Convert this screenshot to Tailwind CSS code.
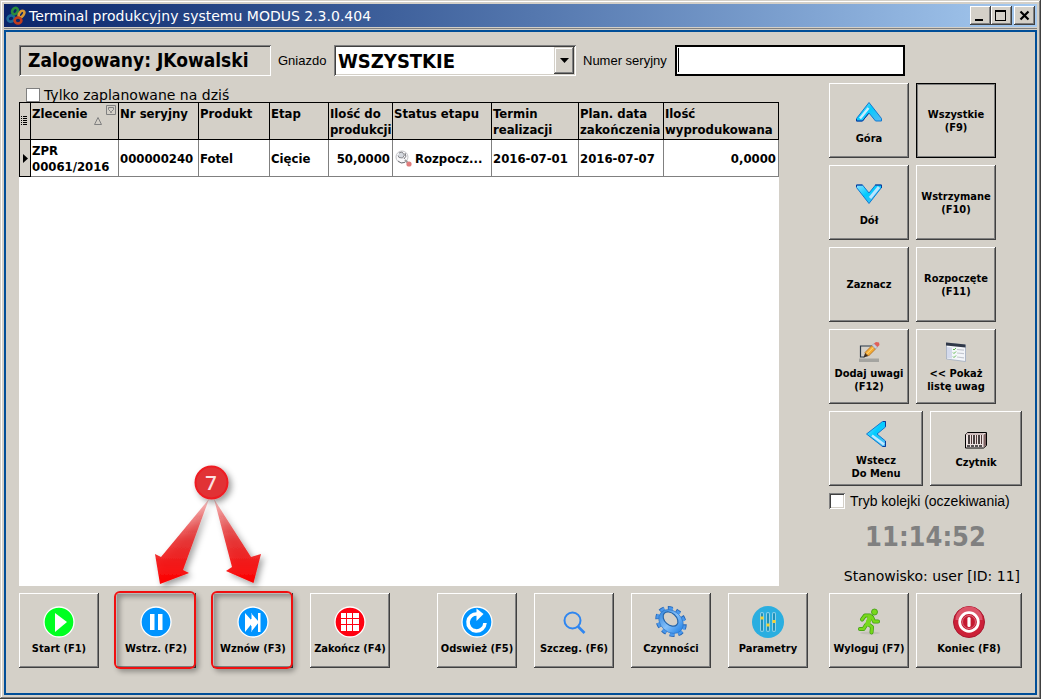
<!DOCTYPE html>
<html lang="pl">
<head>
    <meta charset="UTF-8">
    <meta name="viewport" content="width=device-width, initial-scale=1.0">
    <title>Terminal produkcyjny systemu MODUS 2.3.0.404</title>
    <script src="https://cdn.jsdelivr.net/npm/@tailwindcss/browser@4"></script>
</head>
<body class="bg-[#d4d0c8] text-black font-['DejaVu_Sans_Condensed','DejaVu_Sans',sans-serif]">
    <!-- window frame -->
    <div class="min-h-screen flex flex-col p-1 shadow-[inset_-1px_-1px_0_#404040,inset_1px_1px_0_#d4d0c8,inset_-2px_-2px_0_#808080,inset_2px_2px_0_#fff]">
        <header class="h-[23px] flex items-center pl-[2px] pr-[2px] bg-linear-to-r from-[#0a246a] to-[#a6caf0]">
            <svg class="w-5 h-5" viewBox="0 0 20 20" fill="none" stroke-width="2.600">
                <ellipse cx="5" cy="12.500" rx="3.400" ry="3" stroke="#1c6a98" transform="rotate(-25 5 12.500)"/>
                <ellipse cx="9" cy="5" rx="2.600" ry="3.400" stroke="#2a8a3c" transform="rotate(35 9 5)"/>
                <ellipse cx="15.500" cy="8" rx="2.200" ry="3.600" stroke="#d89a34" transform="rotate(35 15.500 8)"/>
                <ellipse cx="12" cy="14.500" rx="3.400" ry="3" stroke="#c03c1c"/>
            </svg>
            <h1 class="flex-1 pl-[3px] text-[14px] leading-4 text-white whitespace-nowrap font-['DejaVu_Sans',sans-serif]">Terminal produkcyjny systemu MODUS 2.3.0.404</h1>
            <div class="flex">
                <button aria-label="Minimalizuj" class="w-[21px] h-[19px] bg-[#d4d0c8] shadow-[inset_-1px_-1px_0_#404040,inset_1px_1px_0_#fff,inset_-2px_-2px_0_#808080]">
                    <svg class="w-[21px] h-[19px]" viewBox="0 0 21 19"><path d="M5 13h8v2H5z"/></svg>
                </button>
                <button aria-label="Maksymalizuj" class="w-[21px] h-[19px] bg-[#d4d0c8] shadow-[inset_-1px_-1px_0_#404040,inset_1px_1px_0_#fff,inset_-2px_-2px_0_#808080]">
                    <svg class="w-[21px] h-[19px]" viewBox="0 0 21 19"><path fill-rule="evenodd" d="M4 4h11v11H4zM5 6v8h9V6z"/></svg>
                </button>
                <button aria-label="Zamknij" class="ml-[2px] w-[21px] h-[19px] bg-[#d4d0c8] shadow-[inset_-1px_-1px_0_#404040,inset_1px_1px_0_#fff,inset_-2px_-2px_0_#808080]">
                    <svg class="w-[21px] h-[19px]" viewBox="0 0 21 19"><path d="M6.500 5.500l8 8M14.500 5.500l-8 8" stroke="#000" stroke-width="2.200"/></svg>
                </button>
            </div>
        </header>
        <div class="mt-px h-px bg-[#808080]"></div>

        <div class="mt-px flex-1 flex flex-col border-2 border-[#004e98] pt-[13px] px-[13px] pb-[25px]">
            <!-- top bar -->
            <div class="flex items-center h-[31px]">
                <div class="w-[252px] h-full pl-[9px] text-[19px] leading-[31px] font-bold whitespace-nowrap shadow-[inset_1px_1px_0_#808080,inset_-1px_-1px_0_#fff,inset_2px_2px_0_#404040]">Zalogowany: JKowalski</div>
                <label for="gniazdo" class="w-[63px] pl-[7px] text-[13px] font-['Liberation_Sans',sans-serif]">Gniazdo</label>
                <div class="relative w-[242px] h-full bg-white shadow-[inset_1px_1px_0_#808080,inset_-1px_-1px_0_#fff,inset_2px_2px_0_#404040,inset_-2px_-2px_0_#d4d0c8]">
                    <select id="gniazdo" class="appearance-none w-full h-full pl-1 text-[20px] font-bold">
                        <option>WSZYSTKIE</option>
                    </select>
                    <span class="absolute right-[2px] top-[2px] bottom-[2px] w-5 flex items-center justify-center bg-[#d4d0c8] pointer-events-none shadow-[inset_-1px_-1px_0_#404040,inset_1px_1px_0_#d4d0c8,inset_-2px_-2px_0_#808080,inset_2px_2px_0_#fff]">
                        <svg class="w-[9px] h-[5px]" viewBox="0 0 9 5"><path d="M0 0h9L4.500 5z"/></svg>
                    </span>
                </div>
                <label for="numer" class="w-[99px] pl-[7px] text-[13px] whitespace-nowrap font-['Liberation_Sans',sans-serif]">Numer seryjny</label>
                <div class="relative w-[230px] h-full">
                    <input id="numer" type="text" class="w-full h-full pl-2 bg-white border-2 border-black text-[20px] outline-none">
                    <span class="absolute left-[3px] top-[3px] bottom-1 w-px bg-black"></span>
                </div>
            </div>

            <main class="mt-[7px] flex-1 flex gap-[50px]">
                <section class="flex-1 flex flex-col">
                    <div class="h-[19px] flex items-center gap-1 pl-[7px] pt-1">
                        <input id="tylko" type="checkbox" class="appearance-none w-[14px] h-[14px] bg-white border border-[#808080]">
                        <label for="tylko" class="text-[14px] leading-4 font-['DejaVu_Sans',sans-serif]">Tylko zaplanowane na dziś</label>
                    </div>
                    <div class="relative flex-1 bg-white">
                        <table class="table-fixed w-full border-separate border-spacing-0 text-[13px] leading-4 font-bold">
                            <colgroup>
                                <col class="w-3">
                                <col class="w-[88px]">
                                <col class="w-[80px]">
                                <col class="w-[71px]">
                                <col class="w-[59px]">
                                <col class="w-[64px]">
                                <col class="w-[99px]">
                                <col class="w-[87px]">
                                <col class="w-[85px]">
                                <col>
                            </colgroup>
                            <thead class="bg-[#d4d0c8] text-left align-top whitespace-nowrap">
                                <tr class="h-[38px]">
                                    <th class="border border-black align-middle">
                                        <svg class="w-[10px] h-[11px]" viewBox="0 0 10 11"><path d="M3 .500h4M3 2.500h4M3 4.500h4M3 6.500h4M3 8.500h4M1 .500h1M1 2.500h1M1 4.500h1M1 6.500h1M1 8.500h1" stroke="#000"/></svg>
                                    </th>
                                    <th class="relative border-y border-r border-black pl-px pt-[3px]">Zlecenie
                                        <svg class="absolute right-[2px] top-[2px] w-[22px] h-[21px]" viewBox="0 0 22 21" fill="none" stroke="#808080">
                                            <path d="M12.500.500h9v9h-9zM14.500 2.500h5v2l-2 2v1h-1v-1l-2-2zM.500 19.500h7L4 12.500z"/>
                                        </svg>
                                    </th>
                                    <th class="border-y border-r border-black pl-px pt-[3px]">Nr seryjny</th>
                                    <th class="border-y border-r border-black pl-px pt-[3px]">Produkt</th>
                                    <th class="border-y border-r border-black pl-px pt-[3px]">Etap</th>
                                    <th class="border-y border-r border-black pl-px pt-[3px]">Ilość do<br>produkcji</th>
                                    <th class="border-y border-r border-black pl-px pt-[3px]">Status etapu</th>
                                    <th class="border-y border-r border-black pl-px pt-[3px]">Termin<br>realizacji</th>
                                    <th class="border-y border-r border-black pl-px pt-[3px]">Plan. data<br>zakończenia</th>
                                    <th class="border-y border-r border-black pl-px pt-[3px]">Ilość<br>wyprodukowana</th>
                                </tr>
                            </thead>
                            <tbody>
                                <tr class="h-[37px]">
                                    <td class="border-x border-b border-black bg-[#d4d0c8]">
                                        <svg class="w-[10px] h-[9px]" viewBox="0 0 10 9"><path d="M3 0l5 4.500L3 9z"/></svg>
                                    </td>
                                    <td class="border-r border-b border-[#808080] pl-px pt-px">ZPR<br>00061/2016</td>
                                    <td class="border-r border-b border-[#808080] pl-px pt-px">000000240</td>
                                    <td class="border-r border-b border-[#808080] pl-px pt-px">Fotel</td>
                                    <td class="border-r border-b border-[#808080] pl-px pt-px">Cięcie</td>
                                    <td class="border-r border-b border-[#808080] pr-[2px] pt-px text-right">50,0000</td>
                                    <td class="border-r border-b border-[#808080] pl-[2px] pt-px">
                                        <div class="flex items-center gap-[3px]">
                                            <svg class="w-[17px] h-[17px]" viewBox="0 0 17 17">
                                                <circle cx="7" cy="7" r="6" fill="#fafafc" stroke="#c4c4c8"/>
                                                <path d="M4 3l3-1 2.500 3-2 3-3.500-.500-1-2" fill="#d6dae0" stroke="#88888c"/>
                                                <path d="M9 9a4.500 4.500 0 0 0 1-6M3 11a6 6 0 0 0 7 1.300" fill="none" stroke="#77777c"/>
                                                <path d="M10 10l2.500 2.500" stroke="#999" stroke-width="2"/>
                                                <circle cx="14" cy="14" r="2.600" fill="#e07c7c"/>
                                            </svg>
                                            Rozpocz...
                                        </div>
                                    </td>
                                    <td class="border-r border-b border-[#808080] pl-px pt-px">2016-07-01</td>
                                    <td class="border-r border-b border-[#808080] pl-px pt-px">2016-07-07</td>
                                    <td class="border-r border-b border-[#808080] pr-[2px] pt-px text-right">0,0000</td>
                                </tr>
                            </tbody>
                        </table>

                        <!-- callout 7 with arrows to F2 and F3 -->
                        <svg class="absolute bottom-0 left-[121px] w-[140px] h-[126px] overflow-visible pointer-events-none" viewBox="140 460 140 126">
                            <defs>
                                <linearGradient id="arrow" x1="0" y1="498" x2="0" y2="584" gradientUnits="userSpaceOnUse">
                                    <stop offset="0" stop-color="#e01818" stop-opacity=".250"/>
                                    <stop offset=".500" stop-color="#e82020" stop-opacity=".850"/>
                                    <stop offset="1" stop-color="#f00"/>
                                </linearGradient>
                                <filter id="shade" x="-30%" y="-30%" width="170%" height="170%">
                                    <feDropShadow dx="3" dy="3" stdDeviation="3" flood-color="#000" flood-opacity=".400"/>
                                </filter>
                            </defs>
                            <g filter="url(#shade)" fill="url(#arrow)">
                                <path d="M209 499L161 557L155 554L160 584L189 573L183 570Z"/>
                                <path d="M214 499L251 557L261 554L253.500 583L226 571L232 567Z"/>
                            </g>
                            <circle cx="211.500" cy="482.500" r="16" fill="#e13234" stroke="#ee1c24" stroke-width="2" filter="url(#shade)"/>
                            <text x="211" y="490" text-anchor="middle" font-family="Open Sans, sans-serif" font-size="20" font-weight="600" fill="#fbe0e0">7</text>
                        </svg>
                    </div>
                </section>

                <!-- right panel -->
                <aside class="w-[193px] flex flex-col text-[11px] leading-[13px] font-bold">
                    <div class="grid grid-cols-[80px_80px] gap-[7px]">
                        <button class="h-[75px] flex flex-col items-center justify-center gap-1 shadow-[inset_-1px_-1px_0_#404040,inset_1px_1px_0_#fff,inset_-2px_-2px_0_#808080]">
                            <svg class="w-8 h-8" viewBox="0 0 32 32">
                                <defs>
                                    <linearGradient id="blue" x1="0" y1="0" x2="1" y2="1">
                                        <stop offset="0" stop-color="#8fe0ff"/>
                                        <stop offset=".450" stop-color="#00ccff"/>
                                        <stop offset="1" stop-color="#58b8f0"/>
                                    </linearGradient>
                                </defs>
                                <path d="M16 6.500L28.500 22.500V25H22.500L16 17L9.500 25H3.500V22.500Z" fill="url(#blue)" stroke="#1478d0" stroke-linejoin="round"/>
                                <path d="M3.500 23v2h6l6-7.500" fill="none" stroke="#0a3c9c"/>
                                <path d="M7 22.500L15.500 12" stroke="#c8ecff" stroke-width="2.500"/>
                            </svg>
                            Góra
                        </button>
                        <button class="h-[75px] shadow-[inset_0_0_0_1px_#000,inset_-2px_-2px_0_#808080,inset_2px_2px_0_#808080]">Wszystkie<br>(F9)</button>
                        <button class="h-[75px] flex flex-col items-center justify-center gap-1 shadow-[inset_-1px_-1px_0_#404040,inset_1px_1px_0_#fff,inset_-2px_-2px_0_#808080]">
                            <svg class="w-8 h-8" viewBox="0 0 32 32">
                                <path d="M16 25.500L28.500 9.500V7H22.500L16 15L9.500 7H3.500V9.500Z" fill="url(#blue)" stroke="#1478d0" stroke-linejoin="round"/>
                                <path d="M22 7h6.500v3M3.500 9V7h6" fill="none" stroke="#0a3c9c"/>
                                <path d="M17 20L26 9" stroke="#b8e4ff" stroke-width="3"/>
                            </svg>
                            Dół
                        </button>
                        <button class="h-[75px] shadow-[inset_-1px_-1px_0_#404040,inset_1px_1px_0_#fff,inset_-2px_-2px_0_#808080]">Wstrzymane<br>(F10)</button>
                        <button class="h-[75px] shadow-[inset_-1px_-1px_0_#404040,inset_1px_1px_0_#fff,inset_-2px_-2px_0_#808080]">Zaznacz</button>
                        <button class="h-[75px] shadow-[inset_-1px_-1px_0_#404040,inset_1px_1px_0_#fff,inset_-2px_-2px_0_#808080]">Rozpoczęte<br>(F11)</button>
                        <button class="h-[75px] flex flex-col items-center justify-center gap-[2px] whitespace-nowrap shadow-[inset_-1px_-1px_0_#404040,inset_1px_1px_0_#fff,inset_-2px_-2px_0_#808080]">
                            <svg class="w-6 h-6" viewBox="0 0 24 24">
                                <path d="M2 17.500h20v3.500H2z" fill="#a4a4a0"/>
                                <path d="M15 5H3.500v11h4" fill="none" stroke="#283848" stroke-width="1.200"/>
                                <path d="M6.500 16.500l1.800-5L11.500 15z" fill="#3a2c20"/>
                                <path d="M8 11.500L15 4.500L18.500 8L11.500 15z" fill="#f4ac34" stroke="#b06818" stroke-width=".800"/>
                                <path d="M9.500 13.200l7-7" stroke="#ffdc80"/>
                                <path d="M15 4.500l2-2L20.500 6l-2 2z" fill="#ccd0dc" stroke="#8088a0" stroke-width=".500"/>
                                <path d="M17 2.500l2-1.500 3 .500.500 2.500-2 2z" fill="#e06058"/>
                            </svg>
                            <span>Dodaj uwagi<br>(F12)</span>
                        </button>
                        <button class="h-[75px] flex flex-col items-center justify-center gap-[2px] whitespace-nowrap shadow-[inset_-1px_-1px_0_#404040,inset_1px_1px_0_#fff,inset_-2px_-2px_0_#808080]">
                            <svg class="w-6 h-6" viewBox="0 0 24 24">
                                <path d="M2.500 2l19 2v16.500L2.500 18z" fill="#f4f6fa" stroke="#a0acc0" stroke-width=".800"/>
                                <path d="M2 1.500l19.500 2v3L2 4.500z" fill="#303848"/>
                                <path d="M3 6l5 .500v11L3 17z" fill="#d4daec"/>
                                <path d="M13 8.500l7 .700M13 12l7 .700M13 16l7 .800" stroke="#c4c8d0" stroke-width="1.200"/>
                                <path d="M9 8l1 1 2-2M9 11.500l1 1 2-2M9 15.500l1 1 2-2" fill="none" stroke="#60b850"/>
                            </svg>
                            <span>&lt;&lt; Pokaż<br>listę uwag</span>
                        </button>
                    </div>
                    <div class="mt-[7px] flex gap-[7px]">
                        <button class="w-[94px] h-[75px] flex flex-col items-center justify-center gap-1 shadow-[inset_-1px_-1px_0_#404040,inset_1px_1px_0_#fff,inset_-2px_-2px_0_#808080]">
                            <svg class="w-8 h-8" viewBox="0 0 32 32">
                                <path d="M6.500 16L22.500 3.500H25.500V9L17 16L25.500 23V28.500H22.500Z" fill="url(#blue)" stroke="#1478d0" stroke-linejoin="round"/>
                                <path d="M23 3.500h2.500v5M25.500 23v5.500h-3" fill="none" stroke="#0a3c9c"/>
                                <path d="M12 17.500l12 9" stroke="#c0e8ff" stroke-width="2.500"/>
                            </svg>
                            <span>Wstecz<br>Do Menu</span>
                        </button>
                        <button class="flex-1 h-[75px] flex flex-col items-center justify-center gap-1 shadow-[inset_-1px_-1px_0_#404040,inset_1px_1px_0_#fff,inset_-2px_-2px_0_#808080]">
                            <svg class="w-6 h-6" viewBox="0 0 24 24">
                                <path d="M1.500 6.500l2-2h19v13l-3 2.500h-18z" fill="#ece2e0" stroke="#000"/>
                                <path d="M19.500 19.500V7l2.500-2v12.500z" fill="#806464"/>
                                <path d="M2 6h17.500" stroke="#b09898"/>
                                <path d="M5 7v9M10 7v9M15 7v9" stroke="#201818" stroke-width="1.600"/>
                                <path d="M7.500 7v9M12.500 7v9M17.500 7v9" stroke="#503838"/>
                                <path d="M3 18h15" stroke="#222" stroke-width="1.500" stroke-dasharray="3 1"/>
                            </svg>
                            Czytnik
                        </button>
                    </div>
                    <div class="mt-[7px] flex items-center gap-[5px] font-normal">
                        <input id="tryb" type="checkbox" class="appearance-none w-4 h-4 bg-white shadow-[inset_1px_1px_0_#808080,inset_-1px_-1px_0_#fff,inset_2px_2px_0_#404040,inset_-2px_-2px_0_#d4d0c8]">
                        <label for="tryb" class="text-[14px] leading-4 whitespace-nowrap font-['Liberation_Sans',sans-serif]">Tryb kolejki (oczekiwania)</label>
                    </div>
                    <time class="mt-3 text-center text-[27px] leading-8 text-[#808080]">11:14:52</time>
                    <p class="mt-auto pb-[2px] pr-[2px] text-right text-[14px] leading-4 font-normal whitespace-nowrap font-['DejaVu_Sans',sans-serif]">Stanowisko: user [ID: 11]</p>
                </aside>
            </main>

            <!-- action buttons -->
            <footer class="mt-[7px] flex justify-between text-[11px] leading-[13px] font-bold whitespace-nowrap">
                <div class="flex gap-[17px]">
                    <button class="w-20 h-[75px] flex flex-col items-center justify-center gap-1 shadow-[inset_-1px_-1px_0_#404040,inset_1px_1px_0_#fff,inset_-2px_-2px_0_#808080]">
                        <svg class="w-8 h-8" viewBox="0 0 32 32"><circle cx="16" cy="16" r="15" fill="#00ff21" stroke="#fff" stroke-width="1.300"/><path d="M12 7l12 9-12 10z" fill="#fff"/></svg>
                        Start (F1)
                    </button>
                    <div class="relative">
                        <button class="w-20 h-[75px] flex flex-col items-center justify-center gap-1 shadow-[inset_-1px_-1px_0_#404040,inset_1px_1px_0_#fff,inset_-2px_-2px_0_#808080]">
                            <svg class="w-8 h-8" viewBox="0 0 32 32"><circle cx="16" cy="16" r="15" fill="#0094ff" stroke="#fff" stroke-width="1.300"/><path d="M10 8h4.500v16H10zM18 8h4.500v16H18z" fill="#fff"/></svg>
                            Wstrz. (F2)
                        </button>
                        <span class="absolute -left-[2px] right-0 -top-[2px] -bottom-px rounded-md border-2 border-[#f01010] pointer-events-none shadow-[3px_3px_5px_#0000004d,inset_4px_4px_5px_#0000004d]"></span>
                    </div>
                    <div class="relative">
                        <button class="w-20 h-[75px] flex flex-col items-center justify-center gap-1 shadow-[inset_-1px_-1px_0_#404040,inset_1px_1px_0_#fff,inset_-2px_-2px_0_#808080]">
                            <svg class="w-8 h-8" viewBox="0 0 32 32"><circle cx="16" cy="16" r="15" fill="#0094ff" stroke="#fff" stroke-width="1.300"/><path d="M8 7l8 9-8 10zM14 7l8 9-8 10zM21 7h2.500v19H21z" fill="#fff"/><path d="M14 8v5M14 20v5" stroke="#0094ff"/></svg>
                            Wznów (F3)
                        </button>
                        <span class="absolute -left-[2px] right-0 -top-[2px] -bottom-px rounded-md border-2 border-[#f01010] pointer-events-none shadow-[3px_3px_5px_#0000004d,inset_4px_4px_5px_#0000004d]"></span>
                    </div>
                    <button class="w-20 h-[75px] flex flex-col items-center justify-center gap-1 shadow-[inset_-1px_-1px_0_#404040,inset_1px_1px_0_#fff,inset_-2px_-2px_0_#808080]">
                        <svg class="w-8 h-8" viewBox="0 0 32 32"><circle cx="16" cy="16" r="15" fill="#ff0010" stroke="#fff" stroke-width="1.300"/><path d="M7 7h5v5H7zM13 7h5v5h-5zM19 7h6v5h-6zM7 13h5v5H7zM13 13h5v5h-5zM19 13h6v5h-6zM7 19h5v6H7zM13 19h5v6h-5zM19 19h6v6h-6z" fill="#fff"/></svg>
                        Zakończ (F4)
                    </button>
                </div>
                <div class="flex gap-[17px] pl-[26px]">
                    <button class="w-20 h-[75px] flex flex-col items-center justify-center gap-1 shadow-[inset_-1px_-1px_0_#404040,inset_1px_1px_0_#fff,inset_-2px_-2px_0_#808080]">
                        <svg class="w-8 h-8" viewBox="0 0 32 32"><circle cx="16" cy="16" r="15" fill="#0094ff" stroke="#fff" stroke-width="1.300"/><path d="M16.500 8A8.500 8.500 0 1 0 24 17" fill="none" stroke="#fff" stroke-width="3.600"/><path d="M15.500 2.500l7 5.500-7 7z" fill="#fff"/></svg>
                        Odswież (F5)
                    </button>
                    <button class="w-20 h-[75px] flex flex-col items-center justify-center gap-1 shadow-[inset_-1px_-1px_0_#404040,inset_1px_1px_0_#fff,inset_-2px_-2px_0_#808080]">
                        <svg class="w-8 h-8" viewBox="0 0 32 32" fill="none" stroke="#2f86f0" stroke-width="2"><circle cx="14.500" cy="14.500" r="8"/><path d="M20 20.500l6.500 6.500" stroke-width="2.600"/></svg>
                        Szczeg. (F6)
                    </button>
                    <button class="w-20 h-[75px] flex flex-col items-center justify-center gap-1 shadow-[inset_-1px_-1px_0_#404040,inset_1px_1px_0_#fff,inset_-2px_-2px_0_#808080]">
                        <svg class="w-8 h-8" viewBox="0 0 32 32">
                            <defs>
                                <linearGradient id="gear" x1="0" y1="0" x2="1" y2="0">
                                    <stop offset="0" stop-color="#3c8ce0"/>
                                    <stop offset=".500" stop-color="#84c0fa"/>
                                    <stop offset="1" stop-color="#2c88e8"/>
                                </linearGradient>
                            </defs>
                            <g transform="rotate(42 16 15.500)">
                                <ellipse cx="16" cy="15.500" rx="14.500" ry="11.500" fill="none" stroke="#2868b8" stroke-width="5" stroke-dasharray="4.600 3.600"/>
                                <ellipse cx="16" cy="15.500" rx="14.300" ry="11.300" fill="none" stroke="#4a98ec" stroke-width="3.600" stroke-dasharray="4.200 4"/>
                                <ellipse cx="16" cy="15.500" rx="13.500" ry="10.500" fill="url(#gear)" stroke="#2c70c0" stroke-width=".600"/>
                                <ellipse cx="14" cy="14" rx="8.500" ry="5.800" fill="#d4d0c8" stroke="#2464a8" stroke-width="1.200"/>
                            </g>
                        </svg>
                        Czynności
                    </button>
                    <button class="w-20 h-[75px] flex flex-col items-center justify-center gap-1 shadow-[inset_-1px_-1px_0_#404040,inset_1px_1px_0_#fff,inset_-2px_-2px_0_#808080]">
                        <svg class="w-8 h-8" viewBox="0 0 32 32">
                            <circle cx="16" cy="16" r="16" fill="#2aaee0"/>
                            <path d="M10 8v16M16 8v16M22 8v16" stroke="#8fd0e8" stroke-width="4" stroke-linecap="round"/>
                            <path d="M10 8v16M16 8v16M22 8v16" stroke="#2090b8" stroke-width="2" stroke-linecap="round"/>
                            <path d="M8.500 10.500h3v3h-3zM14.500 17.500h3v3h-3zM20.500 14h3v3h-3z" fill="#f4d030"/>
                        </svg>
                        Parametry
                    </button>
                </div>
                <div class="flex gap-[7px]">
                    <button class="w-20 h-[75px] flex flex-col items-center justify-center gap-1 shadow-[inset_-1px_-1px_0_#404040,inset_1px_1px_0_#fff,inset_-2px_-2px_0_#808080]">
                        <svg class="w-8 h-8" viewBox="0 0 32 32">
                            <ellipse cx="17" cy="27" rx="10" ry="1.500" fill="#c4c1ba"/>
                            <g fill="none" stroke-linecap="round" stroke-linejoin="round">
                                <path d="M17.500 10l-3 8M17 9.500h-5l-3 4M19 11l2 4.500h4M14.500 17.500l4.500 3.500-.500 5.500M13 19l-2.500 4H7" stroke="#3c9a10" stroke-width="4"/>
                                <path d="M17.500 10l-3 8M17 9.500h-5l-3 4M19 11l2 4.500h4M14.500 17.500l4.500 3.500-.500 5.500M13 19l-2.500 4H7" stroke="#78d81c" stroke-width="2.600"/>
                                <path d="M17 11l-2.500 7" stroke="#78d81c" stroke-width="4.500"/>
                            </g>
                            <circle cx="21.500" cy="6" r="3" fill="#78d81c" stroke="#3c9a10" stroke-width=".800"/>
                        </svg>
                        Wyloguj (F7)
                    </button>
                    <button class="w-[106px] h-[75px] flex flex-col items-center justify-center gap-1 shadow-[inset_-1px_-1px_0_#404040,inset_1px_1px_0_#fff,inset_-2px_-2px_0_#808080]">
                        <svg class="w-8 h-8" viewBox="0 0 32 32">
                            <circle cx="16" cy="16" r="15.500" fill="#cc2038" stroke="#a81830"/>
                            <path d="M2.500 14a13.500 13.500 0 0 1 27 0z" fill="#dc5468"/>
                            <circle cx="16" cy="16" r="9.300" fill="#c41830" stroke="#fff" stroke-width="2.800"/>
                            <circle cx="16" cy="16" r="6.500" fill="#c41830" stroke="#e08090" stroke-width=".800"/>
                            <path d="M16 12.500v7" stroke="#fff" stroke-width="3.200" stroke-linecap="round"/>
                        </svg>
                        Koniec (F8)
                    </button>
                </div>
            </footer>
        </div>
    </div>
</body>
</html>
